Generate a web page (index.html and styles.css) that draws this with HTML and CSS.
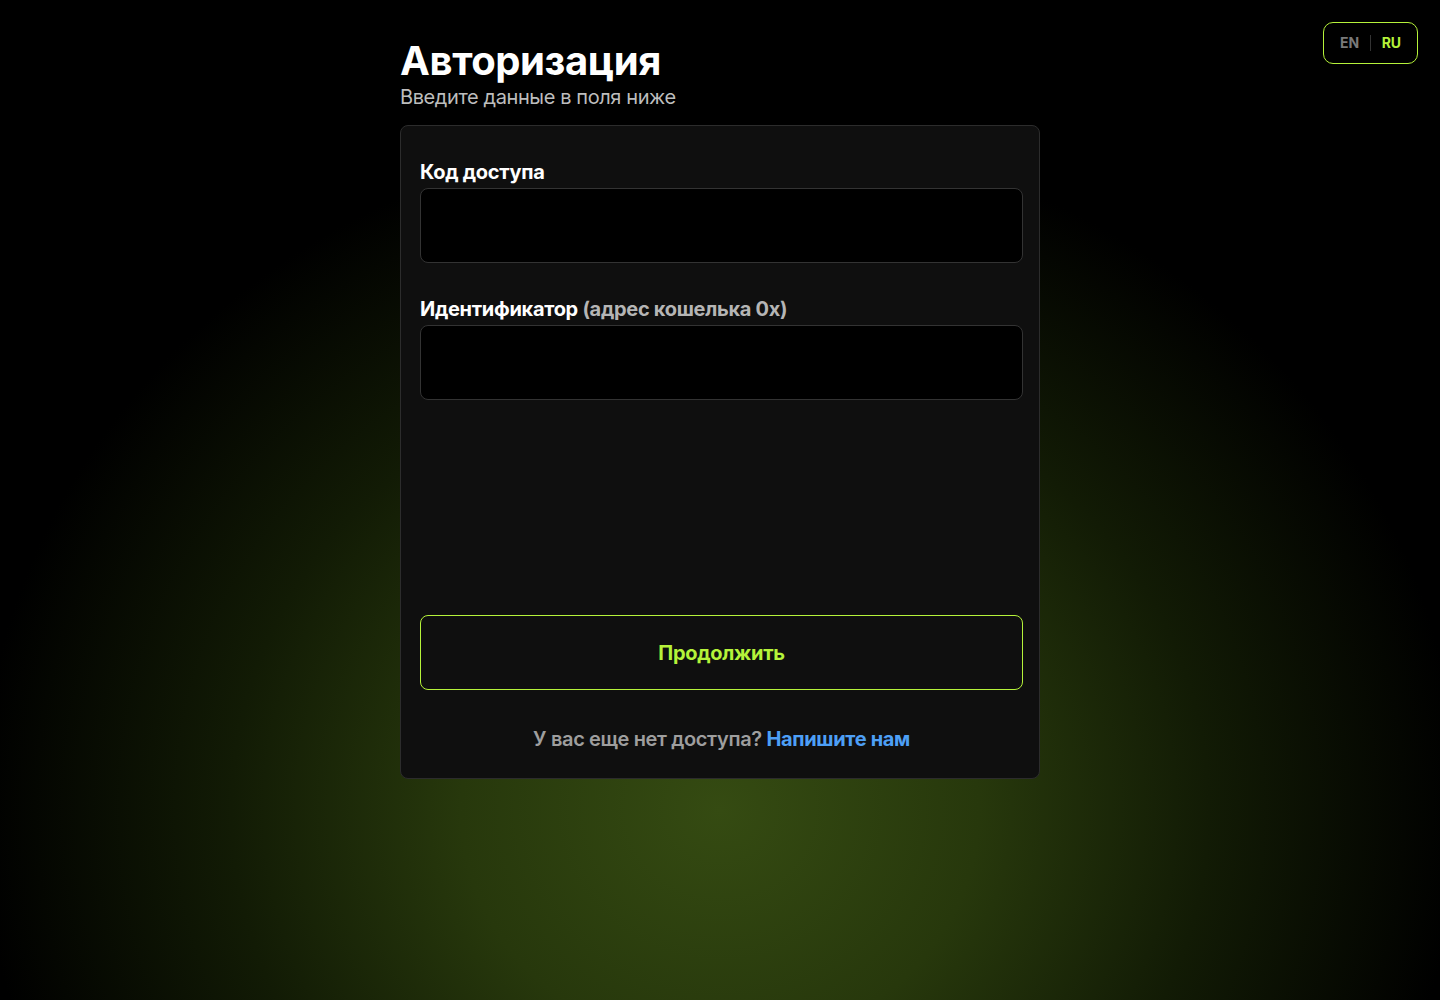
FILE: index.html
```html
<!DOCTYPE html>
<html lang="ru">
<head>
<meta charset="utf-8">
<title>Авторизация</title>
<link rel="stylesheet" href="styles.css">
</head>
<body>
<div class="lang">
  <span class="lang-item">EN</span>
  <span class="lang-sep"></span>
  <span class="lang-item active">RU</span>
</div>
<main class="wrap">
  <h1 class="title">Авторизация</h1>
  <p class="subtitle">Введите данные в поля ниже</p>
  <form class="card">
    <label class="label">Код доступа</label>
    <input class="input" type="text">
    <label class="label label-2">Идентификатор <span class="muted">(адрес кошелька 0x)</span></label>
    <input class="input" type="text">
    <button class="btn" type="button">Продолжить</button>
    <p class="footer">У вас еще нет доступа? <a class="link" href="#">Напишите нам</a></p>
  </form>
</main>
</body>
</html>
```

FILE: styles.css
```css
* { box-sizing: border-box; }
html, body { height: 100%; }
body {
  margin: 0;
  min-height: 1000px;
  font-family: Inter, "Noto Sans", sans-serif;
  color: #fff;
  background-color: #000;
  background-image: radial-gradient(ellipse 740px 680px at 720px 810px, #354b12 0%, #27380c 35%, #121b05 66%, #000 100%);
  background-repeat: no-repeat;
}
.lang {
  position: absolute;
  top: 22px;
  right: 22px;
  width: 95px;
  height: 42px;
  border: 1px solid #b5f23a;
  border-radius: 10px;
  display: flex;
  align-items: center;
  justify-content: center;
  gap: 11px;
  font-size: 14px;
  font-weight: 700;
  letter-spacing: -0.2px;
  padding-bottom: 1px;
}
.lang-item { color: #7a7a7a; }
.lang-item.active { color: #b5f23a; }
.lang-sep { width: 1px; height: 16px; background: #333; }
.wrap {
  width: 640px;
  margin: 0 auto;
  padding-top: 37px;
}
.title {
  margin: 0;
  font-size: 40px;
  line-height: 48px;
  font-weight: 700;
  letter-spacing: -0.4px;
}
.subtitle {
  margin: 0;
  font-size: 20px;
  line-height: 24px;
  color: #bdbdbd;
  letter-spacing: -0.4px;
}
.card {
  margin-top: 16px;
  background: #0f0f0f;
  border: 1px solid #2c2c2c;
  border-radius: 8px;
  padding: 31px 16px 0 19px;
  display: flex;
  flex-direction: column;
  height: 654px;
}
.label {
  font-size: 20px;
  font-weight: 700;
  line-height: 30px;
  letter-spacing: -0.3px;
  margin-bottom: 1px;
}
.label-2 { margin-top: 31px; }
.muted { color: #b5b5b5; }
.input {
  height: 75px;
  background: #000;
  border: 1px solid #333;
  border-radius: 8px;
  width: 100%;
  color: #fff;
  font-size: 18px;
  padding: 0 16px;
  outline: none;
}
.btn {
  margin-top: 215px;
  height: 75px;
  width: 100%;
  background: transparent;
  border: 1px solid #b5f23a;
  border-radius: 8px;
  color: #b5f23a;
  font-family: inherit;
  font-size: 20px;
  font-weight: 700;
  letter-spacing: -0.3px;
}
.footer {
  margin: 37px 0 0;
  text-align: center;
  font-size: 20px;
  font-weight: 600;
  line-height: 24px;
  color: #9e9e9e;
  letter-spacing: -0.35px;
}
.link {
  color: #4d9ff5;
  font-weight: 700;
  text-decoration: none;
}
```
